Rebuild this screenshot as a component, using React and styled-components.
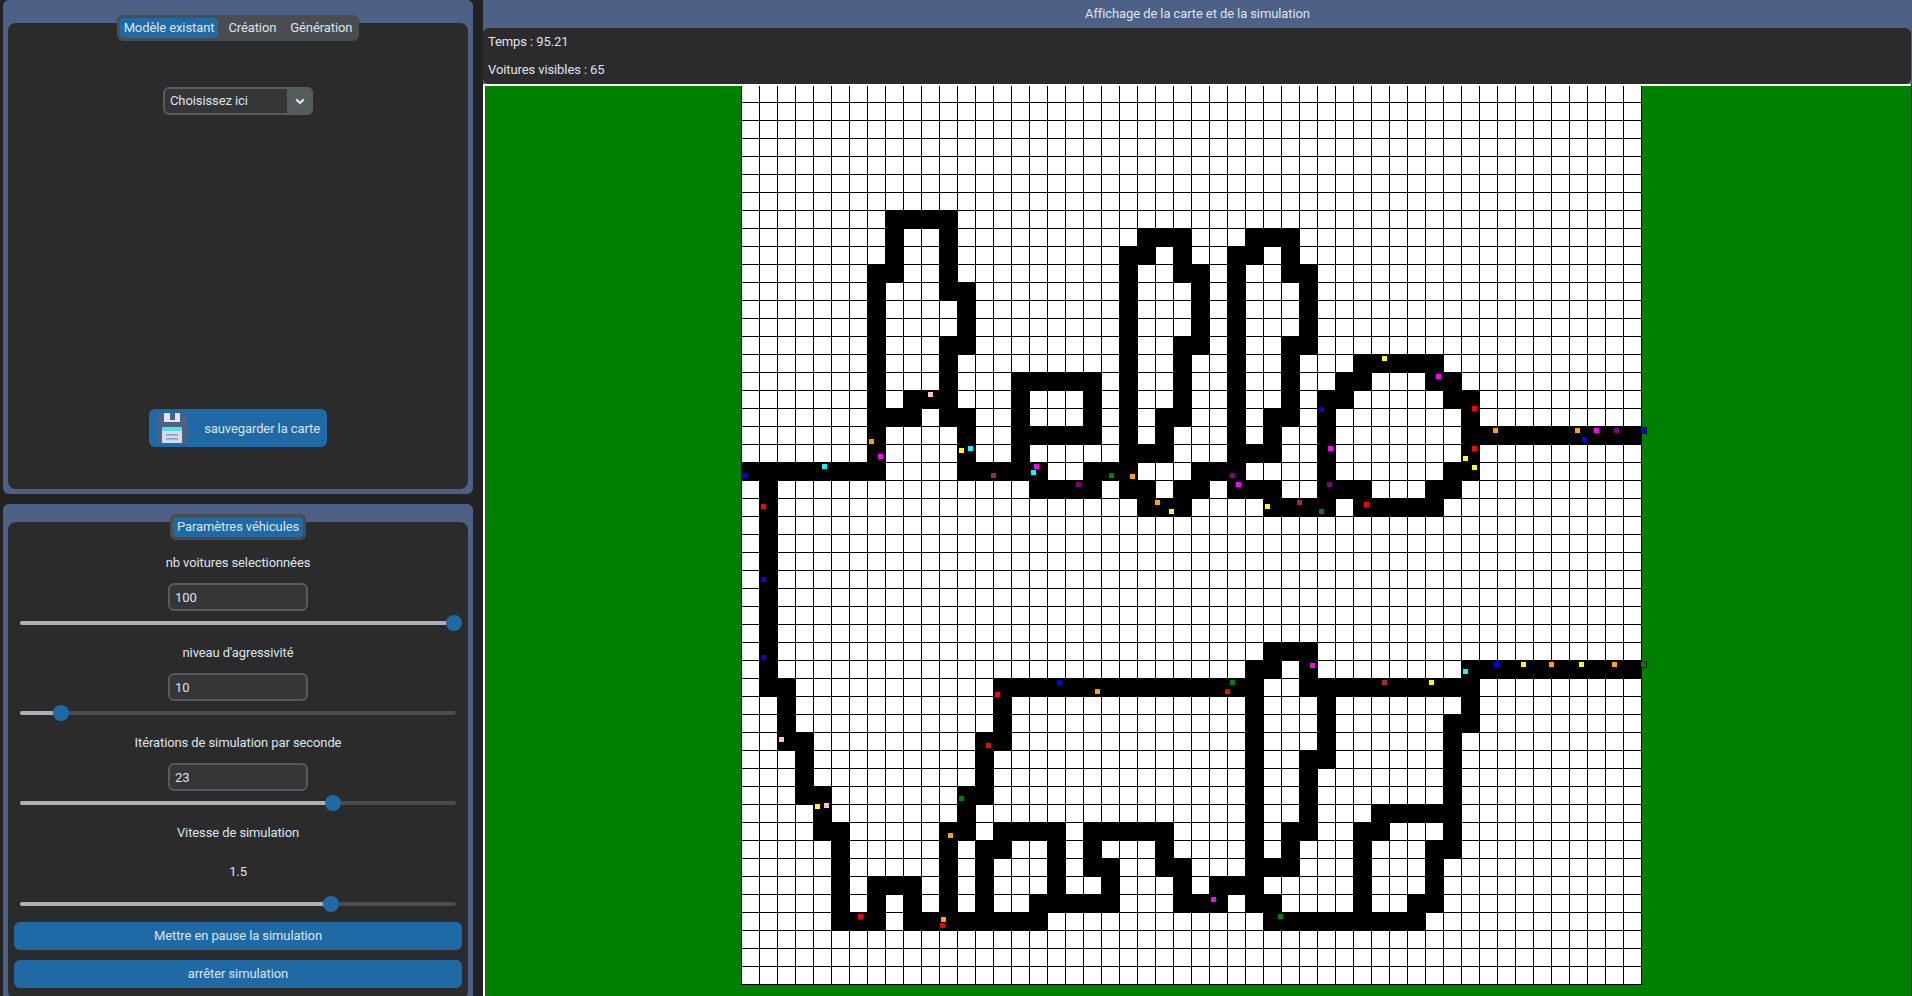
import React from "react";
import styled, { createGlobalStyle } from "styled-components";

const GlobalStyle = createGlobalStyle`
  html, body { margin: 0; padding: 0; background: #222222; }
  body { font-family: Roboto, "Liberation Sans", sans-serif; font-size: 13px; letter-spacing: -0.1px; color: #dce4ee; }
`;

const Page = styled.div`
  width: 1912px; height: 996px; overflow: hidden; display: flex; background: #222222;
`;
const Sidebar = styled.aside`
  width: 470px; margin: 0 10px 0 3px; flex: none; display: flex; flex-direction: column; gap: 10px;
`;
const Panel = styled.section`
  flex: none; box-sizing: border-box; height: ${p => p.$h}px;
  padding: ${p => p.$top}px 5px 5px; background: #4d6085; border-radius: 6px;
  display: flex;
`;
const PanelBody = styled.div`
  flex: 1; background: #2b2b2b; border-radius: 8px; display: flex; flex-direction: column; align-items: center;
`;
const TabBar = styled.div`
  height: 26px; box-sizing: border-box; margin-top: -8px; padding: 3px; display: flex; flex: none;
  background: #4a4d50; border-radius: 6px;
`;
const Tab = styled.div`
  height: 20px; line-height: 19px; padding: 0 ${p => p.$r}px 0 ${p => p.$l}px; border-radius: 4px; white-space: nowrap;
  background: ${p => (p.$active ? "#1f6aa5" : "transparent")};
`;
const SelectBox = styled.div`
  width: 150px; height: 28px; margin-top: 46px; box-sizing: border-box; flex: none; display: flex;
  background: #343638; border: 2px solid #565b5e; border-radius: 6px;
`;
const SelectText = styled.span`
  flex: 1; line-height: 23px; padding-left: 5px;
`;
const SelectArrow = styled.span`
  width: 26px; margin: -2px -2px -2px 0; background: #565b5e; border-radius: 0 6px 6px 0;
  display: flex; align-items: center; justify-content: center;
`;
const SaveButton = styled.div`
  width: 178px; height: 38px; margin: auto 0 42px; padding: 0 7px 0 8px; box-sizing: border-box; flex: none;
  display: flex; align-items: center; justify-content: space-between;
  background: #1f6aa5; border-radius: 6px; white-space: nowrap;
`;
const Label = styled.div`
  height: 20px; line-height: 20px; margin-top: ${p => p.$mt}px; flex: none; text-align: center;
`;
const Value = styled.div`
  height: 20px; line-height: 20px; margin-top: 19px; flex: none;
`;
const Entry = styled.input`
  width: 140px; height: 28px; margin-top: 10px; padding: 0 5px; box-sizing: border-box; flex: none; outline: none;
  font: inherit; letter-spacing: inherit; color: #dce4ee; background: #343638; border: 2px solid #565b5e; border-radius: 6px;
`;
const SliderRoot = styled.div`
  position: relative; width: 436px; height: 16px; flex: none; margin-top: ${p => p.$mt}px;
  display: flex; align-items: center;
`;
const SliderTrack = styled.div`
  width: 100%; height: 4px; background: #4a4d50; border-radius: 2px; overflow: hidden;
`;
const SliderFill = styled.div`
  height: 100%; background: #aab0b5;
`;
const SliderKnob = styled.div`
  position: absolute; top: 0; width: 16px; height: 16px; margin-left: -8px; border-radius: 50%; background: #1f6aa5;
`;
const WideButton = styled.div`
  width: 448px; height: 28px; line-height: 27px; margin-top: 10px; flex: none; text-align: center;
  background: #1f6aa5; border-radius: 6px;
`;
const ViewColumn = styled.main`
  flex: 1; min-width: 0; display: flex; flex-direction: column;
`;
const ViewHead = styled.div`
  flex: none; background: #4d6085;
`;
const ViewTitle = styled.div`
  height: 28px; line-height: 27px; text-align: center;
`;
const InfoBar = styled.div`
  height: 56px; padding-left: 5px; background: #2b2b2b; border-radius: 6px; margin-right: 1px;
`;
const InfoLine = styled.div`
  height: 28px; line-height: 27px;
`;
const MapDrawing = styled.svg`
  display: block; flex: none;
`;

const ROADS = {
  7: ["8-11"],
  8: ["8", "11", "22-24", "28-30"],
  9: ["8", "11", "21-22", "24", "27-28", "30"],
  10: ["7-8", "11", "21", "24-25", "27", "30-31"],
  11: ["7", "11-12", "21", "25", "27", "31"],
  12: ["7", "12", "21", "25", "27", "31"],
  13: ["7", "12", "21", "25", "27", "31"],
  14: ["7", "11-12", "21", "24-25", "27", "30-31"],
  15: ["7", "11", "21", "24", "27", "30", "34-38"],
  16: ["7", "11", "15-19", "21", "24", "27", "30", "33-34", "38-39"],
  17: ["7", "9-11", "15", "19", "21", "24", "27", "30", "32-33", "39-40"],
  18: ["7-9", "11-12", "15", "19", "21", "23-24", "27", "29-30", "32", "40"],
  19: ["7", "12", "15-19", "21", "23", "27", "29", "32", "40-49"],
  20: ["7", "12", "15", "21-23", "27-29", "32", "40"],
  21: ["0-7", "12-16", "19-21", "25-27", "32", "39-40"],
  22: ["1", "16-19", "21-22", "24-25", "27-29", "32-34", "38-39"],
  23: ["1", "22-24", "29-32", "34-38"],
  24: ["1"], 25: ["1"], 26: ["1"], 27: ["1"], 28: ["1"], 29: ["1"], 30: ["1"],
  31: ["1", "29-31"],
  32: ["1", "28-29", "31", "40-49"],
  33: ["1-2", "14-28", "31-40"],
  34: ["2", "14", "28", "32", "40"],
  35: ["2", "14", "28", "32", "39-40"],
  36: ["2-3", "13-14", "28", "32", "39"],
  37: ["3", "13", "28", "31-32", "39"],
  38: ["3", "13", "28", "31", "39"],
  39: ["3-4", "12-13", "28", "31", "39"],
  40: ["4", "12", "28", "31", "35-39"],
  41: ["4-5", "11-12", "14-17", "19-23", "28", "30-31", "34-35", "39"],
  42: ["5", "11", "13-14", "17", "19", "23", "28", "30", "34", "38-39"],
  43: ["5", "11", "13", "17", "19-20", "23-24", "28-30", "34", "38"],
  44: ["5", "7-9", "11", "13", "17", "20", "24", "26-28", "34", "38"],
  45: ["5", "7", "9", "11", "13", "16-20", "24-26", "28-29", "34", "37-38"],
  46: ["5-7", "9-16", "29-37"],
};

const C = { o: "#ffa500", m: "#ff00ff", y: "#ffff00", c: "#00ffff", p: "#ffc0cb", b: "#0000ff", w: "#a52a2a", g: "#008000", u: "#800080", r: "#ff0000" };
const CARS = [
  ["o", 869, 439], ["m", 878, 454], ["y", 959, 448], ["c", 968, 446], ["p", 928, 392], ["c", 822, 464], ["b", 742, 473], ["w", 991, 473],
  ["m", 1034, 464], ["c", 1031, 470], ["g", 1109, 473], ["o", 1130, 474], ["u", 1076, 482], ["o", 1155, 500], ["y", 1169, 509], ["r", 761, 504],
  ["y", 1382, 356], ["m", 1436, 374], ["r", 1472, 406], ["b", 1319, 407], ["o", 1493, 428], ["o", 1575, 428], ["m", 1594, 428], ["u", 1614, 428],
  ["b", 1641, 428], ["b", 1582, 437], ["m", 1328, 446], ["r", 1472, 446], ["y", 1463, 456], ["y", 1472, 465], ["u", 1230, 473], ["m", 1236, 482],
  ["u", 1327, 482], ["w", 1297, 500], ["y", 1265, 504], ["r", 1364, 502], ["g", 1319, 509],
  ["b", 761, 577],
  ["b", 761, 655], ["b", 1057, 680], ["o", 1095, 689], ["r", 995, 692], ["p", 779, 737], ["r", 986, 743], ["g", 959, 796], ["y", 815, 804],
  ["p", 824, 803], ["o", 948, 833], ["r", 858, 914], ["o", 941, 917], ["r", 940, 923],
  ["m", 1310, 663], ["g", 1230, 680], ["r", 1225, 689], ["b", 1494, 662], ["y", 1521, 662], ["o", 1549, 662], ["y", 1579, 662], ["o", 1612, 662],
  ["g", 1641, 662], ["c", 1463, 669], ["w", 1382, 680], ["y", 1429, 680], ["m", 1211, 897], ["g", 1278, 914],
];

const OX = 483, OY = 84, GX = 741 - OX, CELL = 18, COUNT = 50;
const SPAN = CELL * COUNT;
const LINES = Array.from({ length: COUNT + 1 }, (_, i) => i * CELL);

function TrafficMap() {
  return (
    <MapDrawing width="1429" height="912" viewBox="0 0 1429 912" shapeRendering="crispEdges">
      <rect x="0" y="0" width="1428" height="912" fill="#008000" />
      <rect x={GX} y="0" width={SPAN} height={SPAN} fill="#ffffff" />
      {LINES.map(d => <rect key={`v${d}`} x={GX + d} y="0" width="1" height={SPAN + 1} fill="#000" />)}
      {LINES.map(d => <rect key={`h${d}`} x={GX} y={d} width={SPAN + 1} height="1" fill="#000" />)}
      {Object.entries(ROADS).flatMap(([row, spans]) => spans.map(s => {
        const [a, b = a] = s.split("-").map(Number);
        return <rect key={`${row}:${s}`} x={GX + a * CELL} y={row * CELL} width={(b - a + 1) * CELL + 1} height={CELL + 1} fill="#000" />;
      }))}
      {CARS.map(([k, x, y], i) => (
        <rect key={i} x={x - OX - 0.5} y={y - OY - 0.5} width="6" height="6" fill={C[k]} stroke="#000" strokeWidth="1" />
      ))}
      <rect x="0" y="0" width="1428" height="2" fill="#ffffff" />
      <rect x="0" y="0" width="2" height="912" fill="#ffffff" />
    </MapDrawing>
  );
}

function Chevron() {
  return (
    <svg width="10" height="7" viewBox="0 0 10 7">
      <path d="M1.2 1.4 L5 5 L8.8 1.4" fill="none" stroke="#dce4ee" strokeWidth="2.2" />
    </svg>
  );
}

function Floppy() {
  return (
    <svg width="30" height="30" viewBox="0 0 30 30">
      <path d="M2 0 H25 L30 5 V28 a2 2 0 0 1 -2 2 H2 a2 2 0 0 1 -2 -2 V2 a2 2 0 0 1 2 -2 Z" fill="#4d6085" />
      <rect x="7" y="0" width="16" height="9" fill="#dfe5f3" />
      <rect x="13" y="0" width="5" height="7" fill="#4d6085" />
      <rect x="5" y="14" width="20" height="16" fill="#d3dbee" />
      <rect x="5" y="14" width="20" height="4" fill="#58e0ea" />
      <rect x="9" y="21" width="12" height="1.6" fill="#8f9ab5" />
      <rect x="9" y="25" width="12" height="1.6" fill="#8f9ab5" />
    </svg>
  );
}

function Slider({ knob, mt }) {
  return (
    <SliderRoot $mt={mt}>
      <SliderTrack><SliderFill style={{ width: knob }} /></SliderTrack>
      <SliderKnob style={{ left: knob }} />
    </SliderRoot>
  );
}

const PARAMS = [
  { label: "nb voitures selectionnées", value: "100", knob: 434, mt: 13 },
  { label: "niveau d'agressivité", value: "10", knob: 41, mt: 12 },
  { label: "Itérations de simulation par seconde", value: "23", knob: 313, mt: 12 },
];

export default function App() {
  return (
    <Page>
      <GlobalStyle />
      <Sidebar>
        <Panel $h={494} $top={23}>
          <PanelBody>
            <TabBar>
              <Tab $active $l={4} $r={4}>Modèle existant</Tab>
              <Tab $l={10} $r={7}>Création</Tab>
              <Tab $l={7} $r={4}>Génération</Tab>
            </TabBar>
            <SelectBox>
              <SelectText>Choisissez ici</SelectText>
              <SelectArrow><Chevron /></SelectArrow>
            </SelectBox>
            <SaveButton>
              <Floppy />
              <span>sauvegarder la carte</span>
            </SaveButton>
          </PanelBody>
        </Panel>
        <Panel $h={500} $top={18}>
          <PanelBody>
            <TabBar>
              <Tab $active $l={4} $r={4}>Paramètres véhicules</Tab>
            </TabBar>
            {PARAMS.map(p => (
              <React.Fragment key={p.label}>
                <Label $mt={p.mt}>{p.label}</Label>
                <Entry readOnly value={p.value} />
                <Slider knob={p.knob} mt={4} />
              </React.Fragment>
            ))}
            <Label $mt={12}>Vitesse de simulation</Label>
            <Value>1.5</Value>
            <Slider knob={311} mt={14} />
            <WideButton>Mettre en pause la simulation</WideButton>
            <WideButton>arrêter simulation</WideButton>
          </PanelBody>
        </Panel>
      </Sidebar>
      <ViewColumn>
        <ViewHead>
          <ViewTitle>Affichage de la carte et de la simulation</ViewTitle>
          <InfoBar>
            <InfoLine>Temps : 95.21</InfoLine>
            <InfoLine>Voitures visibles : 65</InfoLine>
          </InfoBar>
        </ViewHead>
        <TrafficMap />
      </ViewColumn>
    </Page>
  );
}
